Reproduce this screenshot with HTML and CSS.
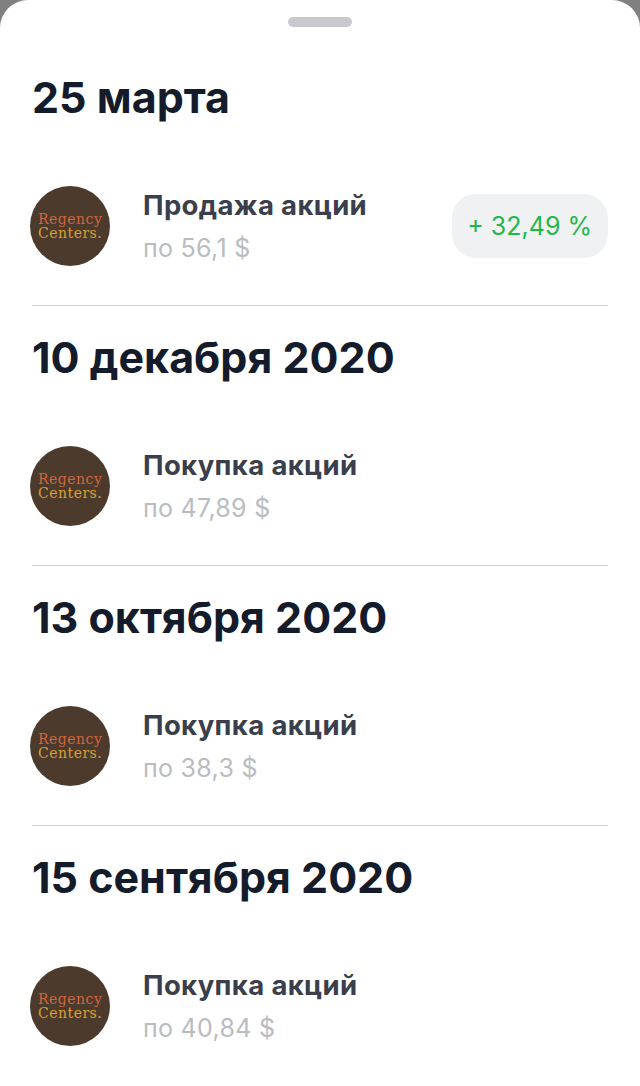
FILE: index.html
```html
<!DOCTYPE html>
<html lang="ru">
<head>
  <meta charset="UTF-8" />
  <meta name="viewport" content="width=device-width, initial-scale=1.0"/>
  <title>Сделки</title>
  <link rel="stylesheet" href="styles.css">
</head>
<body>
  <div class="sheet">
    <div class="handle"></div>

    <section class="day">
      <h2>25 марта</h2>
      <div class="deal">
        <div class="logo"><span class="logo-a">Regency</span><span class="logo-b">Centers.</span></div>
        <div class="info">
          <p class="title">Продажа акций</p>
          <p class="price">по 56,1 $</p>
        </div>
        <div class="badge">+ 32,49 %</div>
      </div>
    </section>

    <section class="day">
      <h2>10 декабря 2020</h2>
      <div class="deal">
        <div class="logo"><span class="logo-a">Regency</span><span class="logo-b">Centers.</span></div>
        <div class="info">
          <p class="title">Покупка акций</p>
          <p class="price">по 47,89 $</p>
        </div>
      </div>
    </section>

    <section class="day">
      <h2>13 октября 2020</h2>
      <div class="deal">
        <div class="logo"><span class="logo-a">Regency</span><span class="logo-b">Centers.</span></div>
        <div class="info">
          <p class="title">Покупка акций</p>
          <p class="price">по 38,3 $</p>
        </div>
      </div>
    </section>

    <section class="day">
      <h2>15 сентября 2020</h2>
      <div class="deal">
        <div class="logo"><span class="logo-a">Regency</span><span class="logo-b">Centers.</span></div>
        <div class="info">
          <p class="title">Покупка акций</p>
          <p class="price">по 40,84 $</p>
        </div>
      </div>
    </section>
  </div>
</body>
</html>
```

FILE: styles.css
```css
html, body {
  margin: 0;
  padding: 0;
}

body {
  width: 640px;
  height: 1086px;
  overflow: hidden;
  background: #808080;
  font-family: Inter, 'Noto Sans', sans-serif;
}

.sheet {
  height: 1086px;
  background: #fff;
  border-radius: 28px 28px 0 0;
  padding: 17px 32px 0;
  box-sizing: border-box;
}

.handle {
  width: 64px;
  height: 10px;
  margin: 0 auto;
  background: #c9c9cd;
  border-radius: 5px;
}

.day {
  height: 260px;
  border-bottom: 1px solid #d2d2d4;
  box-sizing: border-box;
}

.day:first-of-type {
  height: 279px;
}

.day:last-of-type {
  border-bottom: none;
}

h2 {
  margin: 0;
  height: 48px;
  padding-top: 27px;
  font-size: 43px;
  line-height: 48px;
  font-weight: 700;
  color: #141c2b;
  box-sizing: content-box;
}

.day:first-of-type h2 {
  padding-top: 46px;
}

.deal {
  display: flex;
  align-items: center;
  margin: 65px 0 0 -2px;
  height: 80px;
}

.logo {
  flex: none;
  width: 80px;
  height: 80px;
  border-radius: 50%;
  background: #4c3b2d;
  display: flex;
  flex-direction: column;
  align-items: flex-start;
  justify-content: center;
  padding-left: 8px;
  box-sizing: border-box;
  font-family: 'DejaVu Serif', serif;
  font-size: 14px;
  line-height: 14px;
  letter-spacing: 0.5px;
}

.logo-a {
  color: #d0663f;
}

.logo-b {
  color: #dc9e32;
}

.info {
  flex: 1;
  margin-left: 33px;
}

.title {
  margin: 0;
  font-size: 27.5px;
  line-height: 32px;
  font-weight: 700;
  letter-spacing: 0.35px;
  color: #3a3f4b;
}

.price {
  margin: 11px 0 0;
  font-size: 25px;
  line-height: 32px;
  letter-spacing: 0.3px;
  color: #b9bcc0;
}

.badge {
  padding: 0 16px 0 15px;
  height: 64px;
  line-height: 64px;
  border-radius: 24px;
  background: #eff1f2;
  color: #1fb84c;
  font-size: 25px;
}
```
